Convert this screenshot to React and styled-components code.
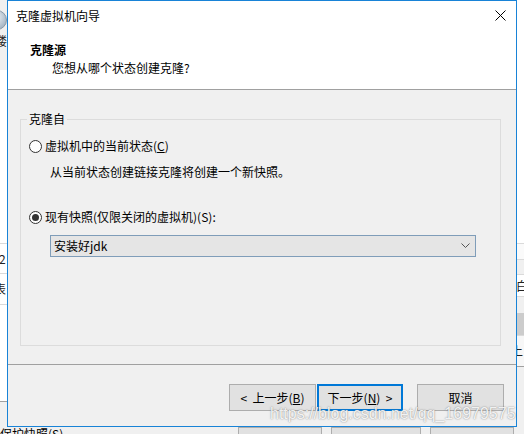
import React from 'react';
import styled, { createGlobalStyle } from 'styled-components';

const FONT = `"Noto Sans CJK SC", "Noto Sans", "Liberation Sans", sans-serif`;

const GlobalStyle = createGlobalStyle`
  html, body {
    margin: 0;
    padding: 0;
    background: #fff;
  }
  #root {
    width: 524px;
    height: 434px;
  }
`;

const Desktop = styled.div`
  position: relative;
  width: 524px;
  height: 434px;
  overflow: hidden;
  background: #fff;
  font-family: ${FONT};
  font-size: 12px;
  color: #000;
`;

// ─── Window behind the dialog (only its edges show) ─────────────────────────

const Strip = styled.div`
  position: absolute;
  top: 0;
  ${p => (p.$side === 'left' ? 'left: 0;' : 'right: 0;')}
  width: 7px;
  height: 427px;
  display: flex;
  flex-direction: column;
  overflow: hidden;
`;

const Band = styled.div`
  flex-shrink: 0;
  box-sizing: border-box;
  height: ${p => p.$h}px;
  background: ${p => p.$bg || '#fff'};
  border-top: ${p => (p.$line ? `1px solid ${p.$line}` : 'none')};
  overflow: hidden;
  white-space: nowrap;
  line-height: ${p => p.$h - 1}px;
`;

const Glyph = styled.span`
  display: ${p => (p.$block ? 'block' : 'inline-block')};
  margin-left: ${p => p.$shift || 0}px;
  line-height: ${p => (p.$block ? '14px' : 'inherit')};
  color: #222;
`;

const BackIcon = styled.svg`
  display: block;
  margin: 10px 0 4px -13px;
`;

const BottomBar = styled.div`
  position: absolute;
  left: 0;
  top: 427px;
  width: 524px;
  height: 7px;
  background: #f0f0f0;
  display: flex;
  align-items: flex-start;
  overflow: hidden;
`;

const BottomLabel = styled.div`
  width: 238px;
  flex-shrink: 0;
  line-height: 16px;
  margin-top: -1px;
  white-space: nowrap;
`;

const BackButton = styled.div`
  flex-shrink: 0;
  box-sizing: border-box;
  width: ${p => p.$w}px;
  height: 24px;
  margin-right: ${p => p.$gap || 0}px;
  background: #e1e1e1;
  border: 1px solid #adadad;
  text-align: center;
  line-height: 20px;
  padding-top: 2px;
  white-space: nowrap;
`;

// ─── Dialog ──────────────────────────────────────────────────────────────────

const Dialog = styled.div`
  position: absolute;
  left: 7px;
  top: 0;
  width: 510px;
  height: 427px;
  box-sizing: border-box;
  border: 1px solid #1883d7;
  background: #f0f0f0;
  display: flex;
  flex-direction: column;
`;

const Header = styled.div`
  height: 88px;
  flex-shrink: 0;
  background: #fff;
  border-bottom: 1px solid #a0a0a0;
  display: flex;
  flex-direction: column;
`;

const TitleBar = styled.div`
  height: 29px;
  display: flex;
  align-items: center;
  justify-content: space-between;
  padding: 0 10px 0 8px;
`;

const TitleText = styled.span`
  line-height: 16px;
`;

const CloseIcon = styled.svg`
  display: block;
`;

const HeaderBody = styled.div`
  padding: 12px 0 0 22px;
  display: flex;
  flex-direction: column;
  gap: 2px;
`;

const Heading = styled.div`
  font-weight: bold;
  line-height: 16px;
`;

const SubHeading = styled.div`
  line-height: 16px;
  padding-left: 22px;
`;

const Body = styled.div`
  flex: 1;
  display: flex;
  flex-direction: column;
  padding: 21px 15px 18px 12px;
`;

const Group = styled.fieldset`
  flex: 1;
  margin: 0;
  padding: 0;
  min-width: 0;
  border: 1px solid #dcdcdc;
  display: flex;
  flex-direction: column;
`;

const GroupLabel = styled.legend`
  margin-left: 6px;
  padding: 0 2px;
  line-height: 16px;
`;

const RadioRow = styled.label`
  display: flex;
  align-items: center;
  height: 20px;
  margin-top: ${p => p.$top}px;
  padding-left: 8px;
  line-height: 16px;
`;

const RadioCircle = styled.span`
  width: 13px;
  height: 13px;
  box-sizing: border-box;
  border: 1px solid #333;
  border-radius: 50%;
  background: #fff;
  display: flex;
  align-items: center;
  justify-content: center;
  margin-right: 3px;
`;

const RadioDot = styled.span`
  width: 7px;
  height: 7px;
  border-radius: 50%;
  background: #333;
`;

const Hint = styled.div`
  margin-top: 8px;
  padding-left: 29px;
  line-height: 16px;
`;

const Combo = styled.div`
  margin: 8px 0 0 29px;
  width: 426px;
  height: 22px;
  box-sizing: border-box;
  border: 1px solid #7f9db9;
  background: #e5e5e5;
  display: flex;
  align-items: center;
  justify-content: space-between;
  padding: 0 5px 0 3px;
  line-height: 16px;
`;

const Footer = styled.div`
  flex-shrink: 0;
  border-top: 1px solid #a0a0a0;
  padding: 19px 12px 15px 0;
  display: flex;
  justify-content: flex-end;
`;

const Button = styled.button`
  width: ${p => p.$w}px;
  height: 27px;
  box-sizing: border-box;
  margin: 0 ${p => p.$gap || 0}px 0 0;
  padding: 0;
  font-family: ${FONT};
  font-size: 12px;
  color: #000;
  background: #e1e1e1;
  border: ${p => (p.$primary ? '2px solid #0078d7' : '1px solid #adadad')};
  border-radius: 0;
  line-height: 16px;
  white-space: pre;
`;

const Watermark = styled.div`
  position: absolute;
  left: 270px;
  top: 405px;
  font-family: "Liberation Sans", Arial, sans-serif;
  font-size: 16px;
  line-height: 18px;
  color: rgba(255, 255, 255, 0.9);
  text-shadow: 0 0 1.5px rgba(90, 90, 90, 0.85);
  white-space: nowrap;
  pointer-events: none;
`;

const Radio = ({ checked, top, children }) => (
  <RadioRow $top={top}>
    <RadioCircle>{checked && <RadioDot />}</RadioCircle>
    {children}
  </RadioRow>
);

const App = () => (
  <>
    <GlobalStyle />
    <Desktop>
      <Strip $side="left">
        <Band $h={70} $bg="#f0f0f0">
          <BackIcon width="20" height="20" viewBox="0 0 20 20">
            <defs>
              <radialGradient id="bi" cx="0.4" cy="0.35" r="0.7">
                <stop offset="0" stopColor="#f4f7fa" />
                <stop offset="1" stopColor="#9fb0c0" />
              </radialGradient>
            </defs>
            <circle cx="10" cy="10" r="9.5" fill="url(#bi)" stroke="#8a9aa8" />
          </BackIcon>
          <Glyph $block $shift={-5}>搂</Glyph>
        </Band>
        <Band $h={173} />
        <Band $h={30} $line="#d9d9d9"><Glyph $shift={-1}>2</Glyph></Band>
        <Band $h={31} $line="#d9d9d9"><Glyph $shift={-6}>表</Glyph></Band>
        <Band $h={97} $line="#d9d9d9" />
        <Band $h={26} $line="#a0a0a0" $bg="#f0f0f0" />
      </Strip>

      <Strip $side="right">
        <Band $h={243} />
        <Band $h={16} $line="#dadada" $bg="#fafafa" />
        <Band $h={15} $line="#dadada" $bg="#f0f0f0" />
        <Band $h={22} $line="#dadada"><Glyph $shift={-1}>白</Glyph></Band>
        <Band $h={17} $line="#dadada" $bg="#f0f0f0" />
        <Band $h={22} $bg="#cccccc" />
        <Band $h={31} $line="#dadada" $bg="#f7f7f7"><Glyph $shift={-6}>上</Glyph></Band>
        <Band $h={61} $line="#a0a0a0" $bg="#f0f0f0" />
      </Strip>

      <BottomBar>
        <BottomLabel>保护快照(S)</BottomLabel>
        <BackButton $w={84} $gap={9}>转到(G)</BackButton>
        <BackButton $w={90} $gap={9}>自动保护(A)</BackButton>
        <BackButton $w={84}>关闭(C)</BackButton>
      </BottomBar>

      <Dialog>
        <Header>
          <TitleBar>
            <TitleText>克隆虚拟机向导</TitleText>
            <CloseIcon width="11" height="11" viewBox="0 0 11 11">
              <path d="M0.5 0.5 L10.5 10.5 M10.5 0.5 L0.5 10.5" stroke="#000" strokeWidth="1" fill="none" />
            </CloseIcon>
          </TitleBar>
          <HeaderBody>
            <Heading>克隆源</Heading>
            <SubHeading>您想从哪个状态创建克隆?</SubHeading>
          </HeaderBody>
        </Header>

        <Body>
          <Group>
            <GroupLabel>克隆自</GroupLabel>
            <Radio top={9}>虚拟机中的当前状态(<u>C</u>)</Radio>
            <Hint>从当前状态创建链接克隆将创建一个新快照。</Hint>
            <Radio checked top={27}>现有快照(仅限关闭的虚拟机)(S):</Radio>
            <Combo>
              <span>安装好jdk</span>
              <svg width="9" height="6" viewBox="0 0 9 6">
                <path d="M0.5 0.5 L4.5 4.5 L8.5 0.5" stroke="#555" strokeWidth="1" fill="none" />
              </svg>
            </Combo>
          </Group>
        </Body>

        <Footer>
          <Button $w={87} $gap={1}>{'<  上一步('}<u>B</u>{')'}</Button>
          <Button $w={86} $gap={14} $primary>{'下一步('}<u>N</u>{')  >'}</Button>
          <Button $w={87}>取消</Button>
        </Footer>
      </Dialog>

      <Watermark>https://blog.csdn.net/qq_16979575</Watermark>
    </Desktop>
  </>
);

export default App;
